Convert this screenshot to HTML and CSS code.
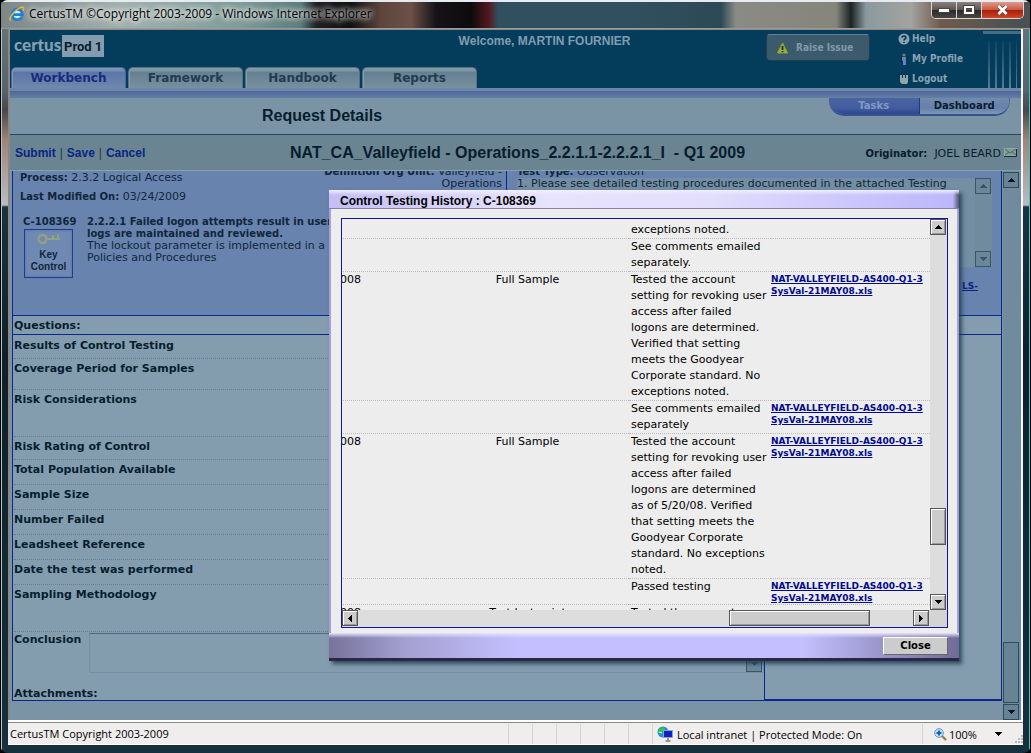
FILE: index.html
```html
<!DOCTYPE html>
<html lang="en">
<head>
<meta charset="utf-8">
<title>CertusTM ©Copyright 2003-2009</title>
<link rel="stylesheet" href="styles.css">
</head>
<body>
<svg class="defs" aria-hidden="true">
  <symbol id="up" viewBox="0 0 7 4"><path d="M3 0h1v1h1v1h1v1h1v1H0V3h1V2h1V1h1z" fill="currentColor"/></symbol>
  <symbol id="down" viewBox="0 0 7 4"><path d="M0 0h7v1H6v1H5v1H4v1H3V3H2V2H1V1H0z" fill="currentColor"/></symbol>
  <symbol id="left" viewBox="0 0 4 7"><path d="M4 0v7H3V6H2V5H1V4H0V3h1V2h1V1h1V0z" fill="currentColor"/></symbol>
  <symbol id="right" viewBox="0 0 4 7"><path d="M0 0h1v1h1v1h1v1h1v1H3v1H2v1H1v1H0z" fill="currentColor"/></symbol>
</svg>
<div class="window">
  <header class="titlebar">
    <svg class="ie" viewBox="0 0 16 16"><circle cx="8" cy="8.500" r="5" fill="#d8efff"/><path d="M13 10.500A5.200 5.200 0 1 1 13.400 8.600H4.500" fill="none" stroke="#1f7fd8" stroke-width="2.800"/><path d="M1.600 14.600C-1.200 11.800 7.600 2 13 1.200c2.600-.3 2 2 .8 3.600" fill="none" stroke="#f0b92a" stroke-width="1.500"/></svg>
    <span class="caption">CertusTM ©Copyright 2003-2009 - Windows Internet Explorer</span>
    <div class="controls">
      <button class="ctl" aria-label="Minimize"><svg width="12" height="5"><rect x=".5" y=".5" width="11" height="4" fill="#fff" stroke="#444"/></svg></button>
      <button class="ctl" aria-label="Maximize"><svg width="12" height="10"><rect x="2" y="2" width="8" height="6" fill="none" stroke="#444" stroke-width="4"/><rect x="2" y="2" width="8" height="6" fill="none" stroke="#fff" stroke-width="2"/></svg></button>
      <button class="ctl close" aria-label="Close window"><svg width="13" height="10" viewBox="0 0 13 10"><path d="M2.500 1l8 8M10.500 1l-8 8" stroke="#555" stroke-width="4"/><path d="M2.500 1l8 8M10.500 1l-8 8" stroke="#fff" stroke-width="2.600"/></svg></button>
    </div>
  </header>

  <div class="client">
    <div class="page">
      <div class="banner">
        <div class="brand"><span class="logo">certus</span><span class="env">Prod 1</span></div>
        <nav class="tabs">
          <a class="tab current" href="#">Workbench</a>
          <a class="tab" href="#">Framework</a>
          <a class="tab" href="#">Handbook</a>
          <a class="tab" href="#">Reports</a>
        </nav>
        <div class="welcome">Welcome, MARTIN FOURNIER</div>
        <button class="raise"><svg width="13" height="12" viewBox="0 0 13 12"><path d="M6.500 1l5 10H1.500z" fill="#9bb02c" stroke="#8ea832"/><path d="M6.500 4v4M6.500 9v1.300" stroke="#14303a" stroke-width="1.800"/></svg>Raise Issue</button>
        <div class="userlinks">
          <a href="#"><svg width="12" height="12" viewBox="0 0 12 12"><circle cx="6" cy="6" r="5.500" fill="#8ba4b4"/><path d="M4 4.700C4 2.500 8.200 2.600 8 4.800 7.900 6 6 6 6 7.500M6 8.700v1.400" fill="none" stroke="#0a2c42" stroke-width="1.500"/></svg>Help</a>
          <a href="#"><svg width="12" height="12" viewBox="0 0 12 12"><circle cx="6" cy="2" r="1.600" fill="#7d7870"/><path d="M4 4h4.500v4H8v4H5V8H4z" fill="#6580ba"/><path d="M3.500 4v5M8.800 4v4" stroke="#05243a"/></svg>My Profile</a>
          <a href="#"><svg width="12" height="12" viewBox="0 0 12 12"><path d="M2 2h8v7l-1 2H4L2 9z" fill="#91a5ac"/><path d="M4.500 1v4M7.500 1v4" stroke="#0b3048"/><path d="M0 1h2" stroke="#052337"/></svg>Logout</a>
        </div>
        <div class="stripes"></div>
      </div>
      <div class="rule"></div>
      <div class="heading">
        <h1>Request Details</h1>
        <div class="pills"><a class="pill on" href="#">Tasks</a><a class="pill" href="#">Dashboard</a></div>
      </div>
      <div class="record">
        <div class="actions"><a href="#">Submit</a><i>|</i><a href="#">Save</a><i>|</i><a href="#">Cancel</a></div>
        <h2>NAT_CA_Valleyfield - Operations_2.2.1.1-2.2.2.1_I&nbsp; - Q1 2009</h2>
        <div class="origin"><b>Originator:</b><span>JOEL BEARD</span><svg width="13" height="9"><rect x=".5" y=".5" width="12" height="7" fill="#7f9d90" stroke="#91a8a4"/><path d="M1 1l5 4 6-4M1 7l4-3m3 0l4 3" stroke="#4f6f70" fill="none"/><path d="M0 8.500h12.500V1" stroke="#0c2c3c" fill="none"/></svg></div>
      </div>

      <div class="body">
        <main class="sheet">
          <section class="summary">
            <div class="info">
              <div class="meta">
                <div class="facts"><p><b>Process:</b> 2.3.2 Logical Access</p><p><b>Last Modified On:</b> 03/24/2009</p></div>
                <p class="unit"><b>Definition Org Unit:</b> Valleyfield -<br>Operations</p>
              </div>
              <div class="control">
                <div class="badge"><b>C-108369</b>
                  <div class="key"><svg width="24" height="12" viewBox="0 0 24 12"><circle cx="5.500" cy="6" r="4" fill="none" stroke="#8fa382" stroke-width="2.400"/><path d="M9 6h14M16 5V2M21 5V1.500" stroke="#8fa382" stroke-width="2"/></svg><span>Key<br>Control</span></div>
                </div>
                <p><b>2.2.2.1 Failed logon attempts result in user<br>logs are maintained and reviewed.</b><br>The lockout parameter is implemented in a<br>Policies and Procedures</p>
              </div>
            </div>
            <div class="test">
              <p class="type"><b>Test Type:</b> Observation</p>
              <div class="notes"><p>1. Please see detailed testing procedures documented in the attached Testing</p>
                <div class="bar dim"><button aria-label="Scroll notes up"><svg width="7" height="4"><use href="#up"/></svg></button><button aria-label="Scroll notes down"><svg width="7" height="4"><use href="#down"/></svg></button></div>
              </div>
              <a class="leadsheet" href="#">LS-</a>
            </div>
          </section>
          <h3 class="qhead">Questions:</h3>
          <section class="lower">
            <div class="questions">
              <div class="q first">Results of Control Testing</div>
              <div class="q mid">Coverage Period for Samples</div>
              <div class="q tall">Risk Considerations</div>
              <div class="q">Risk Rating of Control</div>
              <div class="q std">Total Population Available</div>
              <div class="q std">Sample Size</div>
              <div class="q std">Number Failed</div>
              <div class="q std">Leadsheet Reference</div>
              <div class="q std">Date the test was performed</div>
              <div class="q tall">Sampling Methodology</div>
              <div class="conclusion"><label for="conclusion">Conclusion</label><div class="field"><textarea id="conclusion"></textarea><div class="bar dim foot"><button aria-label="Scroll conclusion down"><svg width="7" height="4"><use href="#down"/></svg></button></div></div></div>
              <div class="attach">Attachments:</div>
            </div>
            <aside class="side"></aside>
          </section>
        </main>
        <div class="bar page-bar"><button aria-label="Scroll page up"><svg width="7" height="4"><use href="#up"/></svg></button><div class="thumb"></div><button aria-label="Scroll page down"><svg width="7" height="4"><use href="#down"/></svg></button></div>
      </div>
    </div>

    <footer class="status">
      <span class="msg">CertusTM Copyright 2003-2009</span>
      <span class="cell"></span><span class="cell"></span><span class="cell"></span><span class="cell"></span><span class="cell"></span><span class="cell"></span>
      <span class="zone"><svg width="17" height="16" viewBox="0 0 17 16"><circle cx="6" cy="6" r="5.500" fill="#278ed2"/><path d="M2 3l4-2 2 2-3 3-4 1zM5 8l3-1v4z" fill="#36c43a"/><path d="M2 6l3 1" stroke="#cff"/><rect x="6.500" y="4.500" width="9" height="7" fill="#0d22c0" stroke="#8ea2d8"/><path d="M11 12v2M8.500 15h5" stroke="#777" stroke-width="1.500"/></svg>Local intranet | Protected Mode: On</span>
      <span class="zoom"><svg width="13" height="13" viewBox="0 0 13 13"><path d="M8 8l4 4" stroke="#a07c55" stroke-width="2.400"/><circle cx="5" cy="5" r="4.300" fill="#cfe8fc" stroke="#5d8fc4"/><path d="M5 2.500v5M2.500 5h5" stroke="#1260c4" stroke-width="2"/></svg>100%<svg class="drop" width="7" height="4"><use href="#down"/></svg></span>
      <svg class="grip" width="9" height="9"><path d="M7 0h2v2H7zM4 3h2v2H4zM7 3h2v2H7zM1 6h2v2H1zM4 6h2v2H4zM7 6h2v2H7z" fill="#b9b7b7"/></svg>
    </footer>
  </div>

  <div class="dialog" role="dialog" aria-labelledby="dlg-title">
    <h2 class="dlg-title" id="dlg-title">Control Testing History : C-108369</h2>
    <div class="dlg-body">
      <div class="scroller">
        <div class="view">
          <table class="history">
            <colgroup><col class="c1"><col class="c2"><col class="c3"><col></colgroup>
            <tr><td></td><td></td><td>Corporate<br>exceptions noted.</td><td></td></tr>
            <tr><td></td><td></td><td>See comments emailed<br>separately.</td><td></td></tr>
            <tr><td>05/21/2008</td><td>Full Sample</td><td>Tested the account<br>setting for revoking user<br>access after failed<br>logons are determined.<br>Verified that setting<br>meets the Goodyear<br>Corporate standard. No<br>exceptions noted.</td><td><a href="#">NAT-VALLEYFIELD-AS400-Q1-3<br>SysVal-21MAY08.xls</a></td></tr>
            <tr><td></td><td></td><td>See comments emailed<br>separately</td><td><a href="#">NAT-VALLEYFIELD-AS400-Q1-3<br>SysVal-21MAY08.xls</a></td></tr>
            <tr><td>05/21/2008</td><td>Full Sample</td><td>Tested the account<br>setting for revoking user<br>access after failed<br>logons are determined<br>as of 5/20/08. Verified<br>that setting meets the<br>Goodyear Corporate<br>standard. No exceptions<br>noted.</td><td><a href="#">NAT-VALLEYFIELD-AS400-Q1-3<br>SysVal-21MAY08.xls</a></td></tr>
            <tr><td></td><td></td><td>Passed testing</td><td><a href="#">NAT-VALLEYFIELD-AS400-Q1-3<br>SysVal-21MAY08.xls</a></td></tr>
            <tr><td>05/21/2008</td><td>Test last point</td><td>Tested the account</td><td></td></tr>
          </table>
        </div>
        <div class="bar vbar"><button aria-label="Scroll up"><svg width="7" height="4"><use href="#up"/></svg></button><div class="thumb"></div><button aria-label="Scroll down"><svg width="7" height="4"><use href="#down"/></svg></button></div>
        <div class="bar hbar"><button aria-label="Scroll left"><svg width="4" height="7"><use href="#left"/></svg></button><div class="thumb"></div><button aria-label="Scroll right"><svg width="4" height="7"><use href="#right"/></svg></button></div>
        <div class="corner"></div>
      </div>
    </div>
    <div class="dlg-foot"><button class="close-btn">Close</button></div>
  </div>
</div>
</body>
</html>
```

FILE: styles.css
```css
* { box-sizing: border-box; }
body, h1, h2, h3, p { margin: 0; }
body { font: 11px/12px "DejaVu Sans", Verdana, sans-serif; color: #071d2e; background: #000; }
button { font: inherit; padding: 0; border: 0; }
a { color: inherit; text-decoration: none; }
svg { display: block; flex: none; }
.defs { display: none; }

.window {
  position: relative; display: flex; flex-direction: column; height: 100vh; overflow: hidden;
  padding: 0 8px 8px; border-radius: 8px;
  background: linear-gradient(90deg, #000 1px, #b9c4c8 1px, #b9c4c8 2px, transparent 2px, transparent calc(100% - 2px), #35c4dc calc(100% - 2px), #35c4dc calc(100% - 1px), #000 calc(100% - 1px)),
    linear-gradient(#6c787c 0, #59646a 90px, #47474b 110px, #a08478 140px, #b9bcc4 205px, #1b333f 207px, #0e2029 360px, #16303c 100%);
}
.titlebar {
  display: flex; align-items: flex-start; height: 29px; margin: 0 -7px; padding: 4px 1px 0 8px;
  border-top: 2px solid #e6ecf2; border-bottom: 1px solid #999;
  background: linear-gradient(90deg, #7d8788 0, #a3b1ae 120px, #7f9c98 240px, #5c7d7c 300px, #221f22 315px, #111 350px, #5d453e 380px, #6b5148 410px, #151317 435px, #0d0b0d 470px, #53191f 488px, #31505f 497px, #31505f 630px, #2c4a55 720px, #8b8b85 735px, #85857b 835px, #1d2324 850px, #8a9a9e 865px, #a3a3a0 910px, #6f5a4c 940px, #4a5053 1020px);
}
.ie { width: 16px; height: 16px; }
.caption { margin-left: 4px; font: 12px/16px "Open Sans", "Segoe UI", sans-serif; color: #000; text-shadow: 0 0 6px #fff, 0 0 6px #fffb, 0 0 9px #fff9; }
.controls { display: flex; margin: -4px 5px 0 auto; border: 1px solid #d5d5d5; border-top: 0; border-radius: 0 0 5px 5px; overflow: hidden; }
.ctl { display: grid; place-items: center; width: 25px; height: 16px; border-right: 1px solid #d5d5d5; background: linear-gradient(#8b807c, #5c5250 50%, #2b2827 50%, #4a4642); }
.ctl.close { width: 41px; border: 0; background: linear-gradient(#e09a8c, #c8573f 50%, #a71d06 50%, #cf4526); }

.client { flex: 1; display: flex; flex-direction: column; min-height: 0; }
.page { flex: 1; display: flex; flex-direction: column; min-height: 0; border-left: 2px solid #8a8784; border-right: 2px solid #f4f6f8; background: #7a94a6; }

.banner { display: grid; grid-template-columns: 467px 1fr 132px 85px 38px; grid-template-rows: 36px 22px; height: 59px; padding-top: 1px; border-top: 1px solid #8e8c88; background: #043c5b; }
.brand { grid-row: 1; grid-column: 1; display: flex; padding: 4px 0 0 4px; }
.logo { width: 48px; font: 900 17px/20px Lato, sans-serif; color: #87a0b0; }
.env { height: 22px; padding: 0 2px; background: #839daf; font: bold 13px/24px Roboto, sans-serif; }
.welcome { grid-row: 1; grid-column: 1 / -1; justify-self: center; margin-left: 58px; padding-top: 3px; font: bold 12px/14px "Liberation Sans", Arial, sans-serif; color: #829caf; }
.tabs { grid-row: 2; grid-column: 1; display: flex; gap: 2px; padding-left: 1px; }
.tab { flex: 1; border: 1px solid #55727f; border-bottom: 0; border-radius: 5px 5px 0 0; background: linear-gradient(#7d98a6 3px, #648090 4px, #7891a0); font-weight: bold; font-size: 12px; line-height: 21px; text-align: center; color: #203d50; box-shadow: inset 1px 1px #829ca9; }
.tab.current { color: #172c7d; border-color: #4a65a0; background: linear-gradient(#7590b3 3px, #5a75a9 4px, #7089ae); }
.raise { grid-row: 1 / 3; grid-column: 3; display: flex; align-items: center; gap: 7px; width: 104px; height: 27px; margin: 3px 0 0; padding-left: 9px; border: 1px solid #20404f; border-top-color: #647f8e; border-radius: 4px; background: #3b5b6d; color: #8199a8; font: bold 10px/12px "DejaVu Sans Condensed", "DejaVu Sans", sans-serif; }
.userlinks { grid-row: 1 / 3; grid-column: 4; display: flex; flex-direction: column; gap: 8px; padding-top: 2px; font: bold 10px/12px "DejaVu Sans Condensed", "DejaVu Sans", sans-serif; color: #89a2b2; }
.userlinks a { display: flex; gap: 2px; }
.stripes { grid-row: 1 / 3; grid-column: 5; border-top: 3px solid #456f87; background: linear-gradient(#043c5b, transparent) 0 0 / 100% 100%, repeating-linear-gradient(90deg, transparent 0 5px, #5a7d92 5px 7px) 0 100% / 34px 48px no-repeat; }
.rule { height: 10px; border-top: 3px solid #6b86a6; background: linear-gradient(#4b6699, #6480a4); }

.heading { display: grid; grid-template-columns: 1fr 181px 11px; height: 37px; border-bottom: 1px solid #24465b; }
.heading h1 { padding: 9px 0 0 252px; font: bold 16px/18px "Liberation Sans", Arial, sans-serif; }
.pills { display: flex; height: 18px; border-radius: 0 0 15px 15px; overflow: hidden; border-bottom: 2px solid #36518e; border-right: 1px solid #4b65a0; }
.pill { flex: 1; font-weight: bold; line-height: 15px; text-align: center; background: linear-gradient(#718bad, #6580ab 10px, #7d98b4); }
.pill.on { background: linear-gradient(#4a64a2, #435c9f 10px, #2d478f); color: #8299c0; border-right: 1px solid #1f3987; }
.pill { font-size: 10px; }
.record { display: grid; grid-template-columns: 280px 1fr auto; height: 36px; padding-right: 4px; border-bottom: 1px solid #88a1aa; background: #6a8492; }
.actions { display: flex; gap: 4px; padding: 11px 0 0 5px; font: bold 12px/14px "Liberation Sans", Arial, sans-serif; color: #0a2484; }
.actions i { font-weight: normal; font-style: normal; color: #213b4c; }
.record h2 { padding-top: 8px; font: bold 16px/20px "Liberation Sans", Arial, sans-serif; white-space: nowrap; }
.origin { display: flex; gap: 3px; padding-top: 13px; }
.origin b { margin-right: 4px; font-size: 10px; }

.body { flex: 1; display: flex; min-height: 0; overflow: hidden; }
.sheet { flex: 1; min-width: 0; margin: 0 1px 0 2px; border-left: 1px solid #0c2690; align-self: flex-start; }
.summary { display: grid; grid-template-columns: 494px 1fr; height: 145px; overflow: hidden; border: solid #0c2690; border-width: 0 1px 1px 0; background: #6883ae; color: #10263a; }
.summary b { font-size: 10px; }
.info { border-right: 1px solid #0c2690; white-space: nowrap; overflow: hidden; }
.meta { display: flex; justify-content: space-between; height: 44px; }
.facts { display: grid; align-content: start; gap: 7px; padding: 1px 0 0 7px; }
.unit { margin-top: -5px; padding-right: 4px; text-align: right; }
.control { display: flex; gap: 10px; padding: 1px 0 0 10px; }
.badge { width: 54px; }
.key { display: grid; justify-items: center; width: 49px; height: 49px; margin: 1px 0 0 1px; padding-top: 3px; border: 1px solid #1e3c96; background: #7089b3; box-shadow: inset 0 0 3px #5570a4; }
.key span { text-align: center; font: bold 10px/12px "Liberation Sans", Arial, sans-serif; }
.test { padding: 0 9px 0 10px; }
.type { margin-top: -5px; }
.notes { display: flex; justify-content: space-between; height: 89px; background: #748fa3; white-space: nowrap; }
.notes p { width: 0; }
.bar { display: flex; flex-direction: column; justify-content: space-between; width: 17px; background: #ddd; }
.bar button, .thumb { display: grid; place-items: center; width: 16px; height: 16px; border: 1px solid #555; background: #ccc; box-shadow: inset 1px 1px #fff, inset -1px -1px #999; color: #000; }
.bar.dim, .page-bar { background: #708b9d; }
.bar.dim button { border-color: #38566a; background: #6b8698; box-shadow: none; color: #38556b; }
.page-bar { width: 18px; padding: 1px 1px 0 0; }
.page-bar button, .page-bar .thumb { border-color: #2c4b5e; background: #688394; box-shadow: none; color: #04141f; }
.page-bar .thumb { height: 61px; margin-top: auto; margin-bottom: 1px; }
.leadsheet { display: block; padding: 13px 14px 0 0; text-align: right; font-weight: bold; font-size: 9px; text-decoration: underline; color: #0b2480; }

.qhead { height: 19px; padding: 4px 1px 0; border: solid #0c2690; border-width: 0 1px 1px 0; background: #839daf; font-size: 11px; line-height: 12px; }
.lower { display: grid; grid-template-columns: 1fr 238px; font-weight: bold; background: #839daf; }
.questions { border-bottom: 1px solid #0c2690; }
.q { height: 23px; margin-left: 1px; padding-top: 4px; border-bottom: 1px dotted #64808f; }
.q.first { height: 24px; padding-top: 5px; }
.q.std { height: 25px; }
.q.mid { height: 31px; }
.q.tall { height: 47px; }
.conclusion { display: flex; gap: 4px; padding: 1px 0 0 1px; height: 56px; }
.conclusion label { width: 71px; padding-top: 1px; }
.field { flex: 1; display: flex; height: 40px; border: 1px solid #748fa2; border-top-color: #4e6c7e; }
.field textarea { flex: 1; border: 0; background: transparent; resize: none; outline: 0; }
.bar.foot { justify-content: flex-end; background: transparent; }
.attach { padding: 0 1px; height: 12px; }
.side { border: 1px solid #0c2690; border-top: 0; border-bottom-width: 2px; }

.status { display: flex; align-items: stretch; height: 25px; border-top: 2px solid #fff; border-bottom: 1px solid #fff; box-shadow: inset 0 1px #8a8a8a; background: #f0eded; font: 11px/24px "Open Sans", "Segoe UI", sans-serif; color: #000; }
.msg { flex: 1; padding-left: 2px; }
.cell, .zone, .zoom { margin-top: 2px; border-left: 1px solid #d4d2d2; line-height: 21px; }
.cell { width: 24px; }
.zone, .zoom { display: flex; align-items: center; gap: 3px; width: 270px; padding-left: 4px; }
.zoom { width: 92px; gap: 2px; padding-left: 11px; }
.drop { margin-left: 16px; }
.grip { align-self: flex-end; }

.dialog { position: absolute; left: 329px; top: 190px; width: 630px; display: flex; flex-direction: column; background: #ededed; border: solid #a5a0dc; border-width: 0 2px; box-shadow: 3px 3px 4px #1b3a4ecc; }
.dlg-title { height: 19px; padding: 4px 11px 0; margin: 0 -2px; background: linear-gradient(#f1efff, transparent 5px), linear-gradient(90deg, #c3bff6, #e8e4fd 35%, #e2defc 60%, #bcb7fa 99%, #55526f); border-bottom: 1px solid #8581a8; font: bold 12px/14px "Liberation Sans", Arial, sans-serif; color: #000; }
.dlg-body { padding: 9px 9px 5px 10px; }
.scroller { display: grid; grid-template-columns: 1fr 17px; grid-template-rows: 391px 17px; border: 1px solid #1014a4; }
.view { overflow: hidden; }
.history { width: 720px; margin: -13px 0 0 -60px; border-collapse: separate; border-spacing: 0; table-layout: fixed; font-size: 11px; line-height: 16px; color: #000; white-space: nowrap; }
.history .c1 { width: 144px; }
.history .c2 { width: 203px; }
.history .c3 { width: 142px; }
.history td { height: 25px; padding: 0; vertical-align: top; border-bottom: 1px dotted #bbb; }
.history td:nth-child(1) { padding-right: 65px; text-align: right; }
.history td:nth-child(2) { text-align: center; }
.history td:nth-child(3) { padding-left: 2px; }
.history a { display: block; padding-top: 1px; line-height: 12px; font-weight: bold; font-size: 9px; text-decoration: underline; color: #000a8c; }
.vbar .thumb { height: 37px; margin-top: auto; margin-bottom: 49px; }
.hbar { flex-direction: row; width: auto; height: 17px; padding-right: 1px; }
.hbar .thumb { width: 141px; margin-left: auto; margin-right: 43px; }
.corner { background: #d4d4d4; }
.dlg-foot { display: flex; justify-content: flex-end; height: 28px; margin: 0 -2px; padding: 4px 11px 0 0; border-bottom: 3px solid #2a2844; background: linear-gradient(#e6e3ff, transparent 5px), linear-gradient(90deg, #77739c, #a39fd0 12%, #c4c0ff 30%, #c4c0ff 75%, #706c98); }
.close-btn { width: 65px; height: 18px; border: 1px solid; border-color: #fff #666 #666 #fff; background: #ccc; font-weight: bold; font-size: 10px; line-height: 16px; color: #000; }
```
